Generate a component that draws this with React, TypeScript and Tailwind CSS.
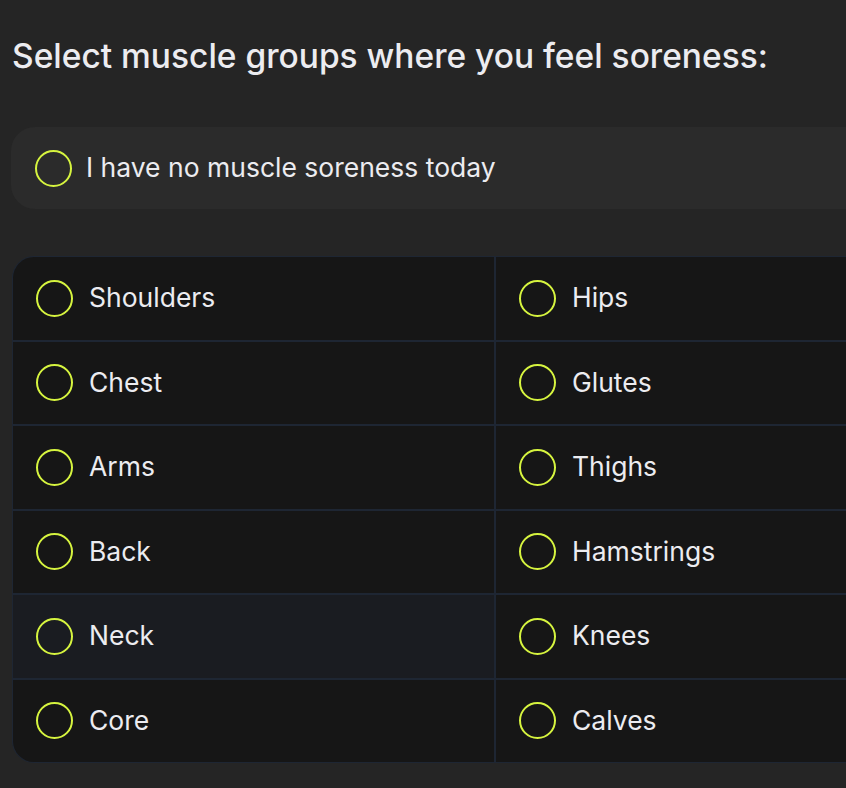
import React from 'react';

const LEFT = ['Shoulders', 'Chest', 'Arms', 'Back', 'Neck', 'Core'];
const RIGHT = ['Hips', 'Glutes', 'Thighs', 'Hamstrings', 'Knees', 'Calves'];

const Radio: React.FC = () => (
  <span className="w-[37px] h-[37px] rounded-full border-2 border-[#d6f43f] shrink-0" />
);

const Cell: React.FC<{ label: string; hover?: boolean }> = ({ label, hover }) => (
  <div className={`h-[82.5px] flex items-center pl-[23px] gap-[16px] ${hover ? 'bg-[#1a1c21]' : 'bg-[#161616]'}`}>
    <Radio />
    <span className="text-[26.5px] text-[#ececf0]">{label}</span>
  </div>
);

const App: React.FC = () => {
  const rows = LEFT.map((l, i) => [l, RIGHT[i]]);
  return (
    <div
      className="w-[846px] h-[788px] overflow-hidden bg-[#252525]"
      style={{ fontFamily: 'Inter, "Noto Sans", sans-serif' }}
    >
      <div className="w-[978px] pl-[11px] pt-[34px]">
        <h1 className="text-[33.5px] font-medium text-[#ececf0] leading-[44px] pl-px">
          Select muscle groups where you feel soreness:
        </h1>

        <div className="mt-[49px] h-[82px] rounded-[24px] bg-[#2b2b2b] flex items-center pl-[24px] gap-[14px]">
          <Radio />
          <span className="text-[26.5px] text-[#ececf0]">I have no muscle soreness today</span>
        </div>

        <div className="mt-[47px] ml-px rounded-[22px] overflow-hidden border border-[#1e2633] bg-[#1e2633] grid grid-cols-2 gap-[2px]">
          {rows.map(([l, r]) => (
            <React.Fragment key={l}>
              <Cell label={l} hover={l === 'Neck'} />
              <Cell label={r} />
            </React.Fragment>
          ))}
        </div>
      </div>
    </div>
  );
};

export default App;
